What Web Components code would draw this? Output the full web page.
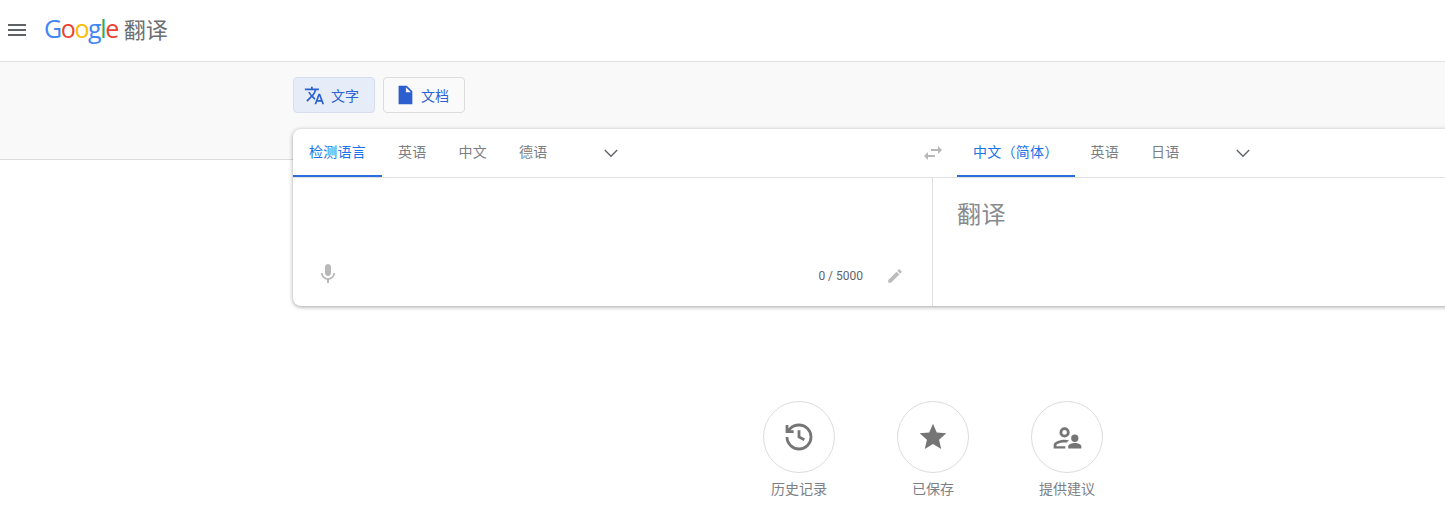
<!DOCTYPE html>
<html lang="zh-CN">
<head>
<meta charset="utf-8">
<title>Google 翻译</title>
<style>
  html, body { margin: 0; height: 100%; overflow: hidden; background: #fff; }
  body { font-family: Roboto, "Noto Sans CJK SC", sans-serif; }
</style>
</head>
<body>
<gt-app></gt-app>
<script>
const ICONS = {
  menu: 'M3 18h18v-2H3v2zm0-5h18v-2H3v2zm0-7v2h18V6H3z',
  translate: 'M12.87 15.07l-2.54-2.51.03-.03c1.74-1.94 2.98-4.17 3.71-6.53H17V4h-7V2H8v2H1v1.99h11.17C11.5 7.92 10.44 9.75 9 11.35 8.07 10.32 7.3 9.19 6.69 8h-2c.73 1.63 1.73 3.17 2.98 4.56l-5.09 5.02L4 19l5-5 3.11 3.11.76-2.04zM18.5 10h-2L12 22h2l1.12-3h4.75L21 22h2l-4.5-12zm-2.62 7l1.62-4.33L19.12 17h-3.24z',
  doc: 'M14 2H5v20h15V8l-6-6zm-1 7V3.5L18.5 9H13z',
  more: 'M5.3 9.6L6.3 8.6 12 14.3 17.7 8.6 18.7 9.6 12 16.3z',
  swap: 'M6.99 11L3 15l3.99 4v-3H14v-2H6.99v-3zM21 9l-3.99-4v3H10v2h7.01v3L21 9z',
  mic: 'M12 14c1.66 0 2.99-1.34 2.99-3L15 5c0-1.66-1.34-3-3-3S9 3.34 9 5v6c0 1.66 1.34 3 3 3zm5.3-3c0 3-2.54 5.1-5.3 5.1S6.7 14 6.7 11H5c0 3.41 2.72 6.23 6 6.72V21h2v-3.28c3.28-.48 6-3.3 6-6.72h-1.7z',
  pencil: 'M3 17.25V21h3.75L17.81 9.94l-3.75-3.75L3 17.25zM20.71 7.04c.39-.39.39-1.02 0-1.41l-2.34-2.34c-.39-.39-1.02-.39-1.41 0l-1.83 1.83 3.75 3.75 1.83-1.83z',
  star: 'M12 17.27L18.18 21l-1.64-7.03L22 9.24l-7.19-.61L12 2 9.19 8.63 2 9.24l5.46 4.73L5.82 21z',
  people: 'M10 5a3.5 3.5 0 1 1 0 7 3.5 3.5 0 0 1 0-7zm0 1.9a1.6 1.6 0 1 0 0 3.2 1.6 1.6 0 0 0 0-3.2zM10 13.5c1 0 2 .1 3 .4l-1.5 1.6c-.5-.1-1-.1-1.500-.1-2.700 0-5.600 1.100-5.600 1.800V18h6.100v1.500H2.500v-2.300c0-2.500 5-3.700 7.500-3.700zM17 10a2.500 2.500 0 1 1 0 5 2.500 2.500 0 0 1 0-5zM17 15.800c2 0 4.500.9 4.500 2.200v1.500h-9V18c0-1.300 2.500-2.200 4.500-2.200z'
};

// the clock is drawn with strokes, the others are filled
const STROKED = {
  history: 'M3 12a9 9 0 1 0 9-9 9.75 9.75 0 0 0-6.74 2.74L3 8M3 3v5h5M12 7v5l4 2'
};

class GtIcon extends HTMLElement {
  connectedCallback() {
    const size = this.getAttribute('size') || 24;
    const name = this.getAttribute('name');
    const attrs = STROKED[name]
      ? `d="${STROKED[name]}" fill="none" stroke="currentColor" stroke-width="2.1"`
      : `d="${ICONS[name]}" fill="currentColor"`;
    this.attachShadow({ mode: 'open' }).innerHTML = `
      <style>
        :host { display: inline-flex; flex: none; width: ${size}px; height: ${size}px; color: inherit; }
        svg { width: 100%; height: 100%; display: block; }
      </style>
      <svg viewBox="0 0 24 24"><path ${attrs}/></svg>`;
  }
}

class GtHeader extends HTMLElement {
  constructor() {
    super();
    this.attachShadow({ mode: 'open' }).innerHTML = `
      <style>
        :host { display: flex; align-items: center; height: 59px; padding-bottom: 2px; border-bottom: 1px solid #e0e0e0; padding-left: 5px; }
        gt-icon { color: #5f6368; }
        .logo { margin-left: 15px; display: flex; align-items: baseline; }
        .g { font-family: "Open Sans", sans-serif; font-weight: 500; font-size: 25px; letter-spacing: -1.4px; line-height: 32px; }
        .name { margin-left: 6px; font-size: 22px; color: #6b6f73; line-height: 32px; }
      </style>
      <gt-icon name="menu"></gt-icon>
      <div class="logo">
        <span class="g"><span style="color:#4285f4">G</span><span style="color:#ea4335">o</span><span style="color:#fbbc05">o</span><span style="color:#4285f4">g</span><span style="color:#34a853">l</span><span style="color:#ea4335">e</span></span>
        <span class="name">翻译</span>
      </div>`;
  }
}

class GtModeButton extends HTMLElement {
  constructor() {
    super();
    this.attachShadow({ mode: 'open' }).innerHTML = `
      <style>
        :host { display: flex; align-items: center; gap: 5px; width: 82px; height: 36px; box-sizing: border-box; padding-left: 10px; border: 1px solid #dadce0; border-radius: 4px; color: #2b62d6; font-size: 14px; background: #fafafa; }
        :host([active]) { background: #e6ecf8; border-color: #d6dfee; }
        ::slotted(gt-icon) { color: #2b5fd0; }
      </style>
      <slot name="icon"></slot><slot></slot>`;
  }
}

class GtTabs extends HTMLElement {
  constructor() {
    super();
    this.attachShadow({ mode: 'open' }).innerHTML = `
      <style>
        :host { display: flex; align-items: center; height: 48px; }
      </style>
      <slot></slot>`;
  }
}

class GtTab extends HTMLElement {
  constructor() {
    super();
    this.attachShadow({ mode: 'open' }).innerHTML = `
      <style>
        :host { display: flex; align-items: center; height: 48px; box-sizing: border-box; padding: 0 16px 3px; border-bottom: 2px solid transparent; font-size: 14px; letter-spacing: .25px; color: #7c8085; }
        :host([active]) { color: #1a73e8; border-bottom-color: #2b6fdf; }
      </style>
      <slot></slot>`;
  }
}

class GtCard extends HTMLElement {
  constructor() {
    super();
    this.attachShadow({ mode: 'open' }).innerHTML = `
      <style>
        :host { display: block; width: 1280px; height: 177px; background: #fff; border-radius: 8px; box-shadow: 0 1px 4px 0 rgba(0,0,0,.37); position: relative; }
        .top { display: flex; height: 49px; box-sizing: border-box; border-bottom: 1px solid #e0e0e0; }
        .half { width: 640px; display: flex; align-items: center; box-sizing: border-box; }
        .swap { width: 24px; margin-left: -12px; margin-right: 12px; color: #b5b7b9; display: flex; }
        .more { color: #5f6368; margin-left: 35px; }
        .body { display: flex; height: 128px; }
        .pane { width: 640px; box-sizing: border-box; }
        .pane.in { display: flex; align-items: flex-end; padding: 0 28px 20px 23px; border-right: 1px solid #e0e0e0; }
        .mic { color: #b8b8b8; }
        .count { margin-left: auto; font-size: 12px; color: #5f6368; line-height: 20px; }
        .pencil { color: #bcbcbc; margin-left: 23px; margin-bottom: 1px; }
        .out { padding: 21px 24px; font-size: 24px; letter-spacing: .5px; line-height: 32px; color: #888b8e; }
      </style>
      <div class="top">
        <div class="half left">
          <gt-tabs>
            <gt-tab active>检测语言</gt-tab><gt-tab>英语</gt-tab><gt-tab>中文</gt-tab><gt-tab>德语</gt-tab>
          </gt-tabs>
          <gt-icon class="more" name="more"></gt-icon>
        </div>
        <div class="half right">
          <div class="swap"><gt-icon name="swap" size="24"></gt-icon></div>
          <gt-tabs>
            <gt-tab active>中文（简体）</gt-tab><gt-tab>英语</gt-tab><gt-tab>日语</gt-tab>
          </gt-tabs>
          <gt-icon class="more" name="more"></gt-icon>
        </div>
      </div>
      <div class="body">
        <div class="pane in">
          <gt-icon class="mic" name="mic" size="24"></gt-icon>
          <span class="count">0 / 5000</span>
          <gt-icon class="pencil" name="pencil" size="18"></gt-icon>
        </div>
        <div class="pane out">翻译</div>
      </div>`;
  }
}

class GtShortcut extends HTMLElement {
  constructor() {
    super();
    this.attachShadow({ mode: 'open' }).innerHTML = `
      <style>
        :host { display: flex; flex-direction: column; align-items: center; width: 72px; font-size: 14px; color: #7c8085; }
        .circle { width: 72px; height: 72px; box-sizing: border-box; border: 1px solid #dadce0; border-radius: 50%; display: flex; align-items: center; justify-content: center; color: #757575; }
        .label { margin-top: 6px; line-height: 20px; white-space: nowrap; }
      </style>
      <div class="circle"><slot name="icon"></slot></div>
      <div class="label"><slot></slot></div>`;
  }
}

class GtApp extends HTMLElement {
  constructor() {
    super();
    this.attachShadow({ mode: 'open' }).innerHTML = `
      <style>
        :host { display: block; width: 1445px; height: 514px; overflow: hidden; }
        .band { height: 82px; background: #f9f9f9; border-bottom: 1px solid #dadce0; padding: 15px 0 0 293px; }
        .modes { display: flex; gap: 8px; }
        .main { margin: -31px 0 0 293px; width: 1280px; }
        .shortcuts { display: flex; justify-content: center; gap: 62px; margin-top: 95px; }
      </style>
      <gt-header></gt-header>
      <div class="band">
        <div class="modes">
          <gt-mode-button active><gt-icon slot="icon" name="translate" size="21" style="margin-right:1px"></gt-icon>文字</gt-mode-button>
          <gt-mode-button><gt-icon slot="icon" name="doc" size="22"></gt-icon>文档</gt-mode-button>
        </div>
      </div>
      <div class="main">
        <gt-card></gt-card>
        <div class="shortcuts">
          <gt-shortcut><gt-icon slot="icon" name="history" size="32"></gt-icon>历史记录</gt-shortcut>
          <gt-shortcut><gt-icon slot="icon" name="star" size="32"></gt-icon>已保存</gt-shortcut>
          <gt-shortcut><gt-icon slot="icon" name="people" size="35"></gt-icon>提供建议</gt-shortcut>
        </div>
      </div>`;
  }
}

customElements.define('gt-icon', GtIcon);
customElements.define('gt-header', GtHeader);
customElements.define('gt-mode-button', GtModeButton);
customElements.define('gt-tabs', GtTabs);
customElements.define('gt-tab', GtTab);
customElements.define('gt-card', GtCard);
customElements.define('gt-shortcut', GtShortcut);
customElements.define('gt-app', GtApp);
</script>
</body>
</html>
